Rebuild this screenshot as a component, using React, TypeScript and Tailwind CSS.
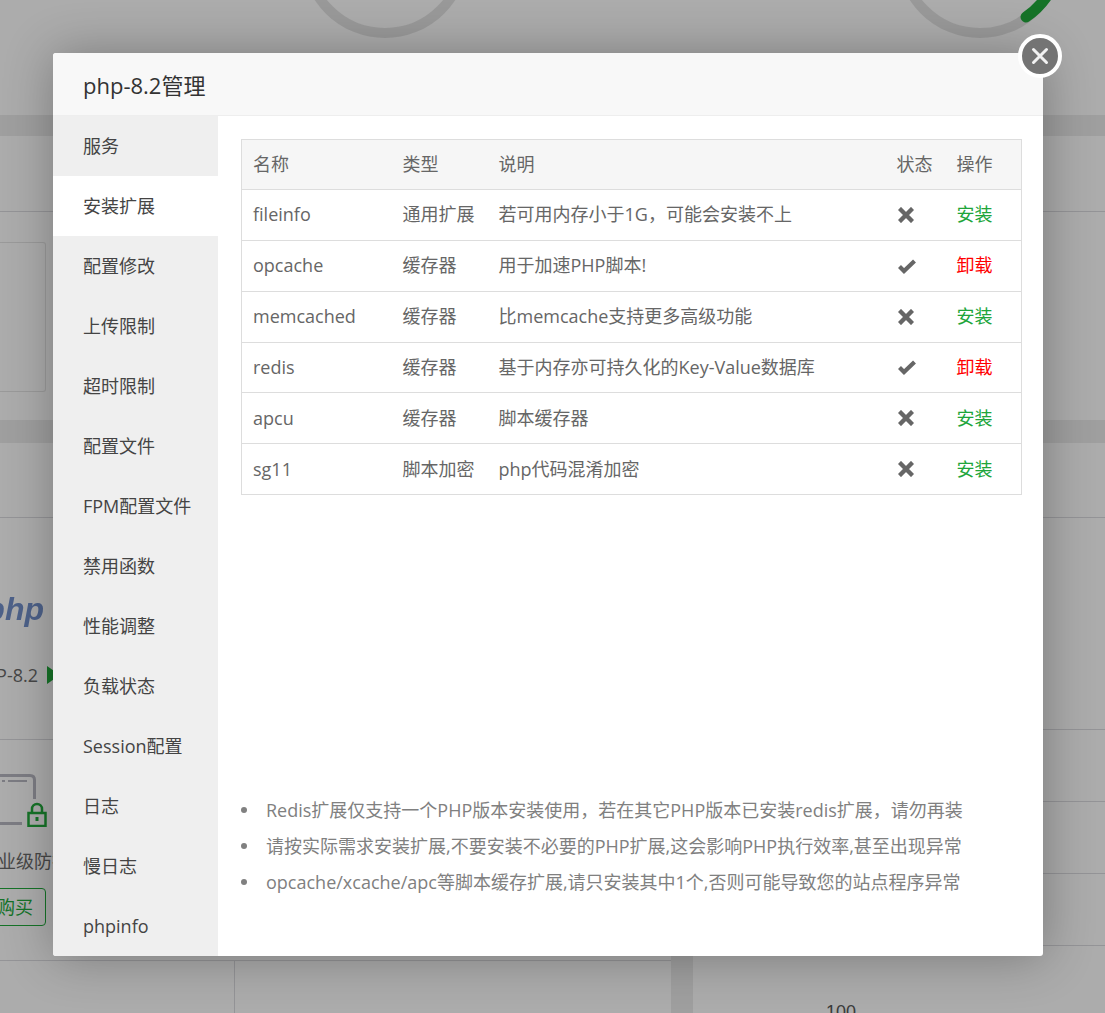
import React from "react";

const menu = ["服务", "安装扩展", "配置修改", "上传限制", "超时限制", "配置文件", "FPM配置文件", "禁用函数", "性能调整", "负载状态", "Session配置", "日志", "慢日志", "phpinfo"];

const rows = [
  { name: "fileinfo", type: "通用扩展", desc: "若可用内存小于1G，可能会安装不上", on: false },
  { name: "opcache", type: "缓存器", desc: "用于加速PHP脚本!", on: true },
  { name: "memcached", type: "缓存器", desc: "比memcache支持更多高级功能", on: false },
  { name: "redis", type: "缓存器", desc: "基于内存亦可持久化的Key-Value数据库", on: true },
  { name: "apcu", type: "缓存器", desc: "脚本缓存器", on: false },
  { name: "sg11", type: "脚本加密", desc: "php代码混淆加密", on: false },
];

const tips = [
  "Redis扩展仅支持一个PHP版本安装使用，若在其它PHP版本已安装redis扩展，请勿再装",
  "请按实际需求安装扩展,不要安装不必要的PHP扩展,这会影响PHP执行效率,甚至出现异常",
  "opcache/xcache/apc等脚本缓存扩展,请只安装其中1个,否则可能导致您的站点程序异常",
];

function Ring({ green }: { green?: boolean }) {
  return (
    <svg width="178" height="40" viewBox="0 0 178 40" className="shrink-0">
      <circle cx="89" cy="-46" r="79" fill="none" stroke="#dcdcdc" strokeWidth="10" />
      {green && <path d="M135 17 A79 79 0 0 0 156 -4" fill="none" stroke="#20a53a" strokeWidth="11" strokeLinecap="round" />}
    </svg>
  );
}

function StatusIcon({ on }: { on: boolean }) {
  if (on) {
    return (
      <svg width="20" height="16" viewBox="0 0 20 16" className="block">
        <path d="M2.5 8.5 L7 13 L17.5 3" fill="none" stroke="#666" strokeWidth="4.2" />
      </svg>
    );
  }
  return (
    <svg width="16" height="16" viewBox="0 0 16 16" className="block ml-[1px]">
      <path d="M3 3 L13 13 M13 3 L3 13" fill="none" stroke="#666" strokeWidth="4.4" strokeLinecap="square" />
    </svg>
  );
}

// the page behind the dialog, mostly hidden
function BackPage() {
  return (
    <div className="flex flex-col h-full text-[18px] text-[#666]">
      <div className="h-[115px] flex items-start pl-[296px] gap-[417px] bg-[#f6f6f6]">
        <Ring />
        <Ring green />
      </div>
      <div className="h-[21px] bg-[#e4e4e4]" />
      <div className="h-[285px] bg-[#f6f6f6]">
        <div className="h-[76px] border-b border-[#d4d4d8]" />
        <div className="mt-[30px] h-[150px] w-[46px] border border-l-0 border-[#dddddd] rounded-r-[3px]" />
      </div>
      <div className="h-[23px] bg-[#e4e4e4]" />
      <div className="flex-1 bg-[#f6f6f6]">
        <div className="h-[75px] border-b border-[#d4d4d8]" />
        <div className="flex h-[495px]">
          <div className="w-[671px] flex flex-col overflow-hidden">
            <div className="h-[222px] border-b border-[#d4d4d8] w-[234px]">
              <div className="flex justify-end pr-[190px] pt-[64px] h-[142px]">
                <span className="shrink-0 h-[54px] italic font-bold text-[32px] leading-[54px] text-[#6f8cc4] blur-[0.6px] font-['Liberation_Sans',sans-serif]">php</span>
              </div>
              <div className="flex justify-end items-center gap-[9px] pr-[174px] h-[30px]">
                <span className="shrink-0 whitespace-nowrap">PHP-8.2</span>
                <svg width="13" height="18" viewBox="0 0 13 18" className="shrink-0">
                  <path d="M0 0 L13 9 L0 18 Z" fill="#20a53a" />
                </svg>
              </div>
            </div>
            <div className="h-[221px] w-full border-b border-[#d4d4d8]">
              <div className="w-[234px] flex justify-end pr-[186px] pt-[34px]">
                <svg width="48" height="53" viewBox="0 0 48 53" className="shrink-0">
                  <path d="M0 1.5 H30 Q34.5 1.5 34.5 6 V25 M0 49.5 H22" fill="none" stroke="#b2b2bc" strokeWidth="3" />
                  <path d="M8 7 H27" fill="none" stroke="#b2b2bc" strokeWidth="2" />
                  <rect x="2" y="6" width="3" height="2" fill="#b2b2bc" />
                  <rect x="28.5" y="39" width="17" height="13" fill="none" stroke="#20a53a" strokeWidth="2.5" />
                  <path d="M32 39 V35 a5 5 0 0 1 10 0 V39" fill="none" stroke="#20a53a" strokeWidth="2.5" />
                  <rect x="35.5" y="43" width="3" height="4" fill="#20a53a" />
                </svg>
              </div>
              <div className="w-[234px] flex justify-end pr-[164px] mt-[21px] h-[26px] leading-[26px]">
                <span className="shrink-0 whitespace-nowrap">企业级防护</span>
              </div>
              <div className="w-[234px] flex justify-end pr-[188px] mt-[14px]">
                <span className="shrink-0 whitespace-nowrap h-[38px] leading-[36px] px-[12px] border border-[#20a53a] rounded-[4px] text-[#20a53a]">立即购买</span>
              </div>
            </div>
            <div className="flex-1 w-[235px] border-r border-[#d4d4d8]" />
          </div>
          <div className="w-[22px] bg-[#e4e4e4]" />
          <div className="flex-1 flex flex-col">
            <div className="h-[212px] border-b border-[#d4d4d8] shrink-0" />
            <div className="h-[72px] border-b border-[#d4d4d8] shrink-0" />
            <div className="h-[72px] border-b border-[#d4d4d8] shrink-0" />
            <div className="h-[72px] border-b border-[#d4d4d8] shrink-0" />
            <div className="pl-[133px] pt-[56px] leading-[20px] text-[#555] font-['Liberation_Sans',sans-serif]">100</div>
          </div>
        </div>
      </div>
    </div>
  );
}

export default function App() {
  return (
    <div className="relative w-full h-[1013px] overflow-hidden font-['Open_Sans','Noto_Sans_CJK_SC',sans-serif]">
      <BackPage />
      <div className="absolute inset-0 bg-black/30" />

      <div className="absolute left-[53px] top-[53px] w-[990px] h-[903px] bg-white rounded-[3px] flex flex-col shadow-[1px_1px_50px_rgba(0,0,0,0.3)]">
        <div className="h-[63px] shrink-0 px-[30px] pt-[3px] flex items-center bg-[#f8f8f8] border-b border-[#eeeeee] rounded-t-[3px] text-[22px] text-[#333]">
          php-8.2管理
        </div>
        <div className="flex flex-1 min-h-0">
          <div className="w-[165px] shrink-0 bg-[#efefef] rounded-bl-[3px]">
            {menu.map((item, i) => (
              <div key={item} className={`h-[60px] pl-[30px] flex items-center text-[18px] text-[#444] ${i === 1 ? "bg-white" : ""}`}>
                {item}
              </div>
            ))}
          </div>
          <div className="flex-1 flex flex-col justify-between pl-[23px] pr-[22px] pt-[23px] pb-[56px]">
            <table className="w-[780px] table-fixed border-collapse border border-[#dddddd] text-[18px] text-[#666]">
              <colgroup>
                <col className="w-[150px]" />
                <col className="w-[96px]" />
                <col className="w-[398px]" />
                <col className="w-[60px]" />
                <col className="w-[76px]" />
              </colgroup>
              <thead>
                <tr className="h-[50px] bg-[#f6f6f6]">
                  <th className="px-[11px] text-left font-normal">名称</th>
                  <th className="px-[11px] text-left font-normal">类型</th>
                  <th className="px-[11px] text-left font-normal">说明</th>
                  <th className="px-[11px] text-left font-normal">状态</th>
                  <th className="px-[11px] text-left font-normal">操作</th>
                </tr>
              </thead>
              <tbody>
                {rows.map((r) => (
                  <tr key={r.name} className="h-[50.85px] border-t border-[#dddddd]">
                    <td className="px-[11px]">{r.name}</td>
                    <td className="px-[11px] whitespace-nowrap">{r.type}</td>
                    <td className="px-[11px]">{r.desc}</td>
                    <td className="px-[11px]">
                      <StatusIcon on={r.on} />
                    </td>
                    <td className={`px-[11px] ${r.on ? "text-[#ff0000]" : "text-[#20a53a]"}`}>{r.on ? "卸载" : "安装"}</td>
                  </tr>
                ))}
              </tbody>
            </table>

            <ul className="text-[18px] leading-[36px] text-[#808080]">
              {tips.map((t) => (
                <li key={t} className="flex items-center gap-[19px] whitespace-nowrap">
                  <span className="w-[6px] h-[6px] rounded-full bg-[#808080] shrink-0" />
                  {t}
                </li>
              ))}
            </ul>
          </div>
        </div>

        <button className="absolute right-[-19px] top-[-19px] w-[44px] h-[44px] rounded-full bg-[#747474] border-[4px] border-white flex items-center justify-center">
          <svg width="20" height="20" viewBox="0 0 20 20">
            <path d="M3.5 3.5 L16.5 16.5 M16.5 3.5 L3.5 16.5" stroke="#f2f2f2" strokeWidth="3" strokeLinecap="round" />
          </svg>
        </button>
      </div>
    </div>
  );
}
